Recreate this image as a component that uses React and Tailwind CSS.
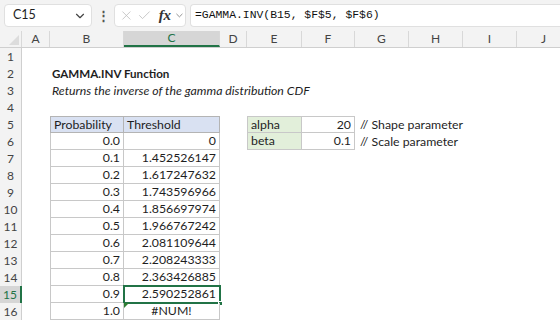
import React from "react";
import { ChevronDown, X, Check } from "lucide-react";

const cols = [
  { k: "A", w: 28 },
  { k: "B", w: 74 },
  { k: "C", w: 96 },
  { k: "D", w: 27 },
  { k: "E", w: 55 },
  { k: "F", w: 53 },
  { k: "G", w: 54 },
  { k: "H", w: 54 },
  { k: "I", w: 54 },
  { k: "J", w: 54 },
];

const data = [
  ["0.0", "0"],
  ["0.1", "1.452526147"],
  ["0.2", "1.617247632"],
  ["0.3", "1.743596966"],
  ["0.4", "1.856697974"],
  ["0.5", "1.966767242"],
  ["0.6", "2.081109644"],
  ["0.7", "2.208243333"],
  ["0.8", "2.363426885"],
  ["0.9", "2.590252861"],
  ["1.0", "#NUM!"],
];

function cellContent(row, col) {
  if (row === 2 && col === "B")
    return <span className="absolute left-[2px] top-0 whitespace-nowrap font-bold text-[11.6px] leading-[17px]">GAMMA.INV Function</span>;
  if (row === 3 && col === "B")
    return <span className="absolute left-[2px] top-0 whitespace-nowrap italic leading-[17px]">Returns the inverse of the gamma distribution CDF</span>;
  if (row === 5 && col === "B") return <div className="h-full px-[3px] bg-[#d9e1f2] border border-[#b4b4b4]">Probability</div>;
  if (row === 5 && col === "C") return <div className="h-full px-[3px] bg-[#d9e1f2] border border-l-0 border-[#b4b4b4]">Threshold</div>;
  if (row >= 6 && row <= 16 && col === "B")
    return <div className="h-full px-[3px] text-right border border-t-0 border-[#c8c8c8]">{data[row - 6][0]}</div>;
  if (row >= 6 && row <= 16 && col === "C") {
    const v = data[row - 6][1];
    return (
      <div className={`h-full px-[3px] border border-t-0 border-l-0 border-[#c8c8c8] ${v === "#NUM!" ? "text-center" : "text-right"} relative`}>
        {v}
        {row === 16 && <span className="absolute left-0 top-0 w-0 h-0 border-t-[5px] border-r-[5px] border-t-[#2e7d32] border-r-transparent" />}
      </div>
    );
  }
  if (row === 5 && col === "E") return <div className="h-full px-[3px] bg-[#e2efda] border border-[#c8c8c8]">alpha</div>;
  if (row === 6 && col === "E") return <div className="h-full px-[3px] bg-[#e2efda] border border-t-0 border-[#c8c8c8]">beta</div>;
  if (row === 5 && col === "F") return <div className="h-full px-[3px] text-right border border-l-0 border-[#c8c8c8]">20</div>;
  if (row === 6 && col === "F") return <div className="h-full px-[3px] text-right border border-t-0 border-l-0 border-[#c8c8c8]">0.1</div>;
  if (row === 5 && col === "G") return <span className="absolute left-[5px] top-0 whitespace-nowrap leading-[17px]">// Shape parameter</span>;
  if (row === 6 && col === "G") return <span className="absolute left-[5px] top-0 whitespace-nowrap leading-[17px]">// Scale parameter</span>;
  return null;
}

export default function App() {
  const rows = Array.from({ length: 16 }, (_, i) => i + 1);
  return (
    <div className="w-[560px] h-[320px] overflow-hidden bg-white font-['Lato','Liberation_Sans',sans-serif] text-[12.3px] text-[#1e1e1e]">
      {/* Formula bar */}
      <div className="h-[31px] bg-[#f3f3f3] flex items-center gap-[4px] pl-[4px]">
        <div className="w-[88px] h-[23px] bg-white border border-[#e0e0e0] rounded-[4px] flex items-center justify-between pl-[8px] pr-[4px]">
          <span className="text-[12.5px]">C15</span>
          <ChevronDown className="w-[14px] h-[14px] text-[#444]" strokeWidth={2} />
        </div>
        <div className="w-[14px] text-center text-[#555] font-bold leading-none text-[13px]">⋮</div>
        <div className="w-[72px] h-[23px] bg-white border border-[#e0e0e0] rounded-[4px] flex items-center pl-[4px] gap-[3px] text-[#bdbdbd]">
          <X className="w-[15px] h-[15px]" strokeWidth={1.3} />
          <Check className="w-[15px] h-[15px]" strokeWidth={1.3} />
          <span className="ml-[4px] font-['Liberation_Serif',serif] italic font-bold text-[15px] text-[#333] leading-none">fx</span>
          <ChevronDown className="w-[11px] h-[11px] text-[#777]" strokeWidth={1.8} />
        </div>
        <div className="flex-1 h-[23px] bg-white border border-[#e0e0e0] rounded-l-[4px] border-r-0 flex items-center pl-[4px] font-['Liberation_Mono',monospace] text-[11.4px] text-[#111]">
          =GAMMA.INV(B15, $F$5, $F$6)
        </div>
      </div>

      {/* Column headers */}
      <div className="flex h-[17px] bg-[#f3f3f3] border-b border-[#cfcfcf] text-[12px] text-[#444]">
        <div className="w-[22px] shrink-0 relative border-r border-[#d8d8d8]">
          <span className="absolute right-[2px] bottom-[2px] w-0 h-0 border-b-[10px] border-l-[10px] border-b-[#dcdcdc] border-l-transparent" />
        </div>
        {cols.map((c) => (
          <div
            key={c.k}
            style={{ width: c.w }}
            className={`shrink-0 flex items-center justify-center border-r border-[#d8d8d8] ${c.k === "C" ? "bg-[#d6d6d6] border-b-2 border-b-[#217346] text-[#217346]" : ""}`}
          >
            {c.k}
          </div>
        ))}
      </div>

      {/* Rows */}
      {rows.map((r) => (
        <div key={r} className="flex h-[17px]">
          <div
            className={`w-[22px] shrink-0 flex items-center justify-center text-[12px] border-r ${
              r === 15 ? "bg-[#d6d6d6] text-[#217346] border-r-2 border-r-[#217346]" : "bg-[#f3f3f3] text-[#444] border-[#cfcfcf]"
            }`}
          >
            {r}
          </div>
          {cols.map((c) => (
            <div key={c.k} style={{ width: c.w }} className="shrink-0 relative leading-[16px]">
              {cellContent(r, c.k)}
              {r === 15 && c.k === "C" && (
                <div className="absolute -left-[1px] -top-[1px] -right-[1px] -bottom-[1px] border-2 border-[#217346] pointer-events-none">
                  <span className="absolute -right-[4px] -bottom-[4px] w-[5px] h-[5px] bg-[#217346] border border-white" />
                </div>
              )}
            </div>
          ))}
        </div>
      ))}
    </div>
  );
}
